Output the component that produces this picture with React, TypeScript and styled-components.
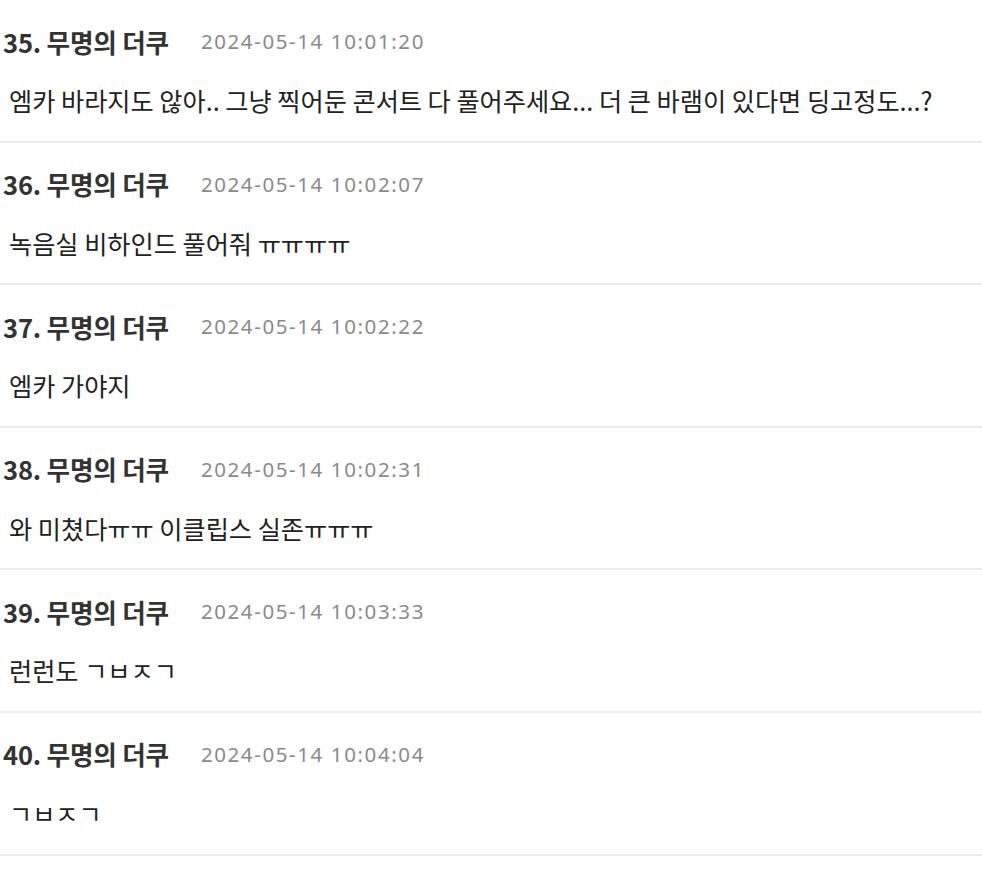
import React from "react";
import styled, { createGlobalStyle } from "styled-components";

const Global = createGlobalStyle`
  html, body { margin: 0; padding: 0; background: #ffffff; }
  body { font-family: "Noto Sans CJK KR", "Noto Sans", sans-serif; -webkit-font-smoothing: antialiased; }
`;

const List = styled.ul`
  list-style: none;
  margin: 0;
  padding: 0;
  width: 982px;
`;

const Item = styled.li`
  display: flex;
  flex-direction: column;
  gap: 29px;
  padding: 26px 0 25.6px 0;
  border-bottom: 2px solid #ececec;
`;

const Header = styled.div`
  display: flex;
  align-items: center;
  gap: 32px;
  height: 30px;
  padding-left: 3px;
`;

const Name = styled.span`
  font-size: 25.6px;
  font-weight: 700;
  color: #333333;
  letter-spacing: -0.2px;
`;

const Time = styled.span`
  font-family: "Noto Sans", "Noto Sans CJK KR", sans-serif;
  font-size: 20.5px;
  letter-spacing: 1.6px;
  color: #8a8a8a;
`;

const Body = styled.div`
  height: 30px;
  line-height: 30px;
  padding-left: 9px;
  font-size: 25.2px;
  color: #222222;
`;

const comments = [
  { no: 35, time: "2024-05-14 10:01:20", text: "엠카 바라지도 않아.. 그냥 찍어둔 콘서트 다 풀어주세요... 더 큰 바램이 있다면 딩고정도...?" },
  { no: 36, time: "2024-05-14 10:02:07", text: "녹음실 비하인드 풀어줘 ㅠㅠㅠㅠ" },
  { no: 37, time: "2024-05-14 10:02:22", text: "엠카 가야지" },
  { no: 38, time: "2024-05-14 10:02:31", text: "와 미쳤다ㅠㅠ 이클립스 실존ㅠㅠㅠ" },
  { no: 39, time: "2024-05-14 10:03:33", text: "런런도 ㄱㅂㅈㄱ" },
  { no: 40, time: "2024-05-14 10:04:04", text: "ㄱㅂㅈㄱ" },
];

export default function App() {
  return (
    <>
      <Global />
      <List>
        {comments.map((c) => (
          <Item key={c.no}>
            <Header>
              <Name>{c.no}. 무명의 더쿠</Name>
              <Time>{c.time}</Time>
            </Header>
            <Body>{c.text}</Body>
          </Item>
        ))}
      </List>
    </>
  );
}
